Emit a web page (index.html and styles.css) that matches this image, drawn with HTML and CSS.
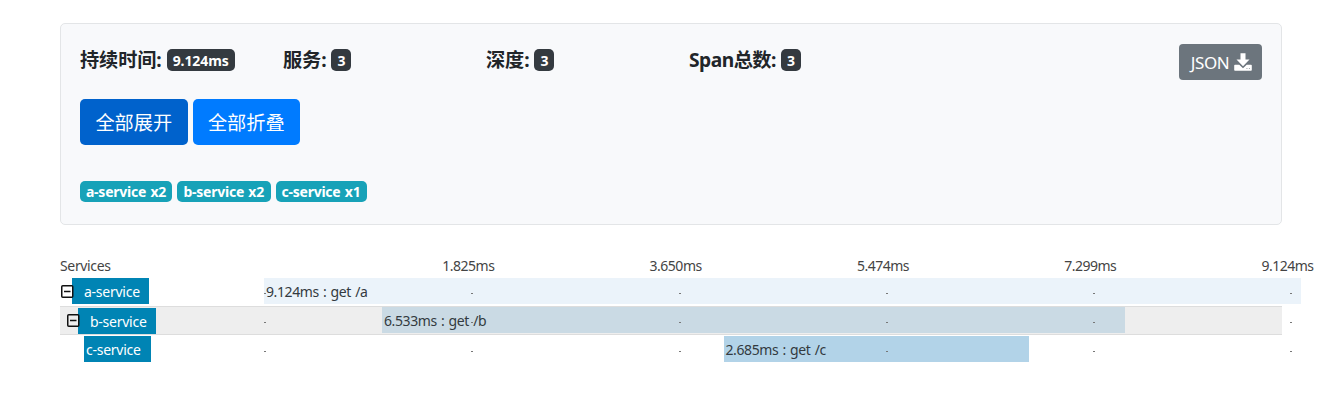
FILE: index.html
```html
<!DOCTYPE html>
<html lang="zh-CN">
<head>
<meta charset="utf-8">
<title>Trace</title>
<link rel="stylesheet" href="styles.css">
</head>
<body>
<main class="page">
  <section class="summary">
    <div class="top">
      <div class="stats">
        <h2 class="stat stat-time"><span class="label">持续时间:</span><span class="badge badge-time">9.124ms</span></h2>
        <h2 class="stat"><span class="label">服务:</span><span class="badge">3</span></h2>
        <h2 class="stat"><span class="label">深度:</span><span class="badge">3</span></h2>
        <h2 class="stat"><span class="label label-span">Span总数:</span><span class="badge">3</span></h2>
      </div>
      <button class="json"><span class="json-text">JSON</span>
        <svg class="download" viewBox="0 0 18 18"><path fill="#fff" d="M6.500 .3h5v6.200h4L9 13.200 2.500 6.500h4z"/><path fill="#fff" d="M1 11.700h4.300L9 15.200l3.700-3.500H17q.8 0 .8.8v4.500q0 .8-.8.8H1q-.8 0-.8-.8v-4.500q0-.8.8-.8z"/><path fill="#6c757d" d="M12.500 15.200h.9v.9h-.9zM14.900 15.200h.9v.9h-.9z"/></svg>
      </button>
    </div>
    <div class="actions">
      <button class="btn active">全部展开</button>
      <button class="btn">全部折叠</button>
    </div>
    <div class="tags"><span class="tag tag-a">a-service x2</span><span class="tag tag-b">b-service x2</span><span class="tag tag-c">c-service x1</span></div>
  </section>

  <section class="trace">
    <div class="row head">
      <div class="side">Services</div>
      <div class="track"><span></span><span>1.825ms</span><span>3.650ms</span><span>5.474ms</span><span>7.299ms</span><span class="last">9.124ms</span></div>
    </div>
    <div class="row">
      <div class="side"><svg class="toggle" viewBox="0 0 13 13"><rect x=".75" y=".75" width="11" height="11.500" rx="1"/><path d="M3 6.500h6.500"/></svg><span class="service service-a">a-service</span></div>
      <div class="track"><div class="bar bar-a" style="margin-left:0;width:1037px">9.124ms : get /a</div><i></i><i></i><i></i><i></i><i></i><i></i></div>
    </div>
    <div class="row selected">
      <div class="side level-1"><svg class="toggle" viewBox="0 0 13 13"><rect x=".75" y=".75" width="11" height="11.500" rx="1"/><path d="M3 6.500h6.500"/></svg><span class="service service-b">b-service</span></div>
      <div class="track"><div class="bar bar-b" style="margin-left:118px;width:743px">6.533ms : get /b</div><i></i><i></i><i></i><i></i><i></i><i></i></div>
    </div>
    <div class="row">
      <div class="side level-2"><span class="service service-c">c-service</span></div>
      <div class="track"><div class="bar bar-c" style="margin-left:459.500px;width:305.500px">2.685ms : get /c</div><i></i><i></i><i></i><i></i><i></i><i></i></div>
    </div>
  </section>
</main>
</body>
</html>
```
FILE: styles.css
```css
* { box-sizing: border-box; }
body {
  margin: 0;
  background: #fff;
  color: #212529;
  font: 14px/20px "Noto Sans", "Noto Sans CJK SC", sans-serif;
}
.page { height: 416px; padding: 23px 0 0 60px; overflow: hidden; }
.summary {
  width: 1222px;
  height: 202px;
  padding: 20px 19px;
  border: 1px solid #e3e5e7;
  border-radius: 5px;
  background: #f8f9fb;
}
.top { display: flex; justify-content: space-between; height: 55px; }
.stats { display: flex; }
.stat {
  display: flex;
  align-items: center;
  width: 203px;
  height: 31px;
  margin: 0;
  gap: 5px;
  font-size: 19.200px;
  line-height: 31px;
  font-weight: 700;
  white-space: nowrap;
}
.label { letter-spacing: -.1px; }
.label-span { letter-spacing: -.5px; }
.badge {
  width: 20px;
  height: 22px;
  border-radius: 5px;
  background: #343a40;
  color: #fff;
  font-size: 14px;
  line-height: 23px;
  text-align: center;
}
.badge-time { width: 68px; letter-spacing: -.1px; }
button { border: 0; color: #fff; font-family: inherit; white-space: nowrap; }
.json {
  display: flex;
  align-items: center;
  gap: 4px;
  width: 83px;
  height: 36px;
  padding: 0 10px 0 11px;
  border-radius: 4px;
  background: #6c757d;
  font-size: 17px;
}
.json-text { width: 40px; letter-spacing: -.45px; }
.download { width: 18px; height: 18px; flex: none; }
.actions { display: flex; gap: 5px; }
.btn {
  width: 107.500px;
  height: 46px;
  padding: 0;
  border-radius: 5px;
  background: #007bff;
  font-size: 19.200px;
}
.btn.active { background: #0062cc; }
.tags { display: flex; gap: 5px; margin-top: 36px; }
.tag {
  height: 21px;
  border-radius: 5px;
  background: #17a2b8;
  color: #fff;
  font-size: 14px;
  line-height: 22px;
  font-weight: 700;
  letter-spacing: -.25px;
  word-spacing: 1px;
  text-align: center;
  white-space: nowrap;
}
.tag-a { width: 92px; }
.tag-b { width: 93.500px; }
.tag-c { width: 91px; }
.trace { padding-top: 30px; }
.row { display: flex; width: 1222px; height: 29px; padding: 1px 0 2px; }
.head { height: 22px; padding: 0; line-height: 22px; color: #444; }
.side { display: flex; align-items: center; flex: none; width: 204px; padding-left: 1px; }
.head .side { padding-left: 0; letter-spacing: -.35px; }
.level-1 { padding-left: 7px; }
.level-2 { padding-left: 24px; }
.track {
  display: grid;
  grid-template-columns: repeat(4, 207.300px) 197px 11px;
  flex: none;
  width: 1037px;
}
.head .track { display: flex; }
.head .track span {
  flex: none;
  width: 207.300px;
  letter-spacing: -.5px;
  text-indent: -29px;
}
.head .track .last { width: 60px; margin-left: -10px; }
.toggle {
  position: relative;
  z-index: 1;
  width: 13px;
  height: 13px;
  flex: none;
  fill: none;
  stroke: #111;
  stroke-width: 1.500;
}
.service {
  height: 26px;
  margin-left: -2px;
  padding-left: 12px;
  background: #0084b4;
  color: #fff;
  line-height: 28px;
  letter-spacing: -.25px;
  white-space: nowrap;
}
.service-a { width: 77px; }
.service-b { width: 78px; line-height: 27px; }
.service-c { width: 67px; margin-left: 0; padding-left: 2px; }
.track i {
  grid-row: 1;
  width: 2px;
  height: 1px;
  margin-top: 15px;
  background: #777;
}
.bar {
  grid-row: 1;
  grid-column: 1 / -1;
  height: 26px;
  padding-left: 2px;
  color: #333a40;
  line-height: 28px;
  letter-spacing: -.4px;
  word-spacing: 1px;
  white-space: nowrap;
}
.track i:nth-of-type(1) { grid-column: 1; }
.track i:nth-of-type(2) { grid-column: 2; }
.track i:nth-of-type(3) { grid-column: 3; }
.track i:nth-of-type(4) { grid-column: 4; }
.track i:nth-of-type(5) { grid-column: 5; }
.track i:nth-of-type(6) { grid-column: 6; }
.bar-a { background: #ebf3fa; }
.bar-b { background: #cadae4; }
.bar-c { background: #b2d3e8; }
.selected {
  padding: 0;
  border-top: 1px solid #ddd;
  border-bottom: 1px solid #ddd;
  background: #eee;
}
```
